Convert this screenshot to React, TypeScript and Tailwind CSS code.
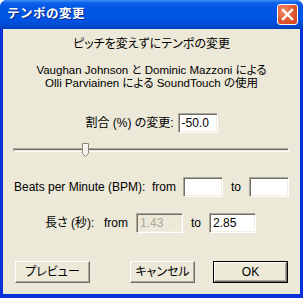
import React from "react";

const editBox =
  "h-[20px] border border-t-[#aca899] border-l-[#aca899] border-b-white border-r-white shadow-[inset_1px_1px_0_#716f64,inset_-1px_-1px_0_#f1efe2] px-[3px] flex items-center text-[12px] leading-none";

const btnBase =
  "h-[22px] bg-[#ece9d8] flex items-center justify-center text-[12px] border border-t-white border-l-white border-b-[#716f64] border-r-[#716f64] shadow-[inset_-1px_-1px_0_#aca899]";

const EditBox = ({ value = "", width, disabled = false }: { value?: string; width: string; disabled?: boolean }) => (
  <div className={`${editBox} ${width} ${disabled ? "bg-[#ece9d8] text-[#aca899]" : "bg-white text-black"}`}>
    {value}
  </div>
);

export default function App() {
  return (
    <div className="w-[303px] h-[298px] rounded-t-[7px] bg-[#0831d9] flex flex-col font-['Liberation_Sans','Noto_Sans_CJK_JP',sans-serif] text-[12px] text-black [font-feature-settings:'palt']">
      {/* title bar */}
      <div className="h-[29px] shrink-0 rounded-t-[7px] bg-[linear-gradient(to_bottom,#3c8df7_0px,#0b61ea_3px,#0055e5_8px,#0054e3_20px,#0049d1_26px,#003cba_29px)] flex items-center pl-[7px] pr-[5px]">
        <span className="flex-1 text-white font-bold text-[12.5px] tracking-[0.5px] [font-feature-settings:normal] [text-shadow:1px_1px_0_#0a2a8a]">
          テンポの変更
        </span>
        <div className="w-[21px] h-[21px] rounded-[3px] border border-white bg-[radial-gradient(circle_at_30%_30%,#f08a66_0%,#e0582f_55%,#c9421e_100%)] flex items-center justify-center">
          <svg width="13" height="13" viewBox="0 0 13 13">
            <path d="M2 2L11 11M11 2L2 11" stroke="white" strokeWidth="2.4" strokeLinecap="square" />
          </svg>
        </div>
      </div>

      {/* client area */}
      <div className="flex-1 mx-[3px] mb-[4px] bg-[#ece9d8] flex flex-col">
        <div className="mt-[9px] text-center leading-[13px]">ピッチを変えずにテンポの変更</div>
        <div className="mt-[13px] text-center text-[11.5px] leading-[13px]">
          <div>Vaughan Johnson と Dominic Mazzoni による</div>
          <div>Olli Parviainen による SoundTouch の使用</div>
        </div>

        <div className="mt-[23px] flex items-center justify-center gap-[4px]">
          <span>割合 (%) の変更:</span>
          <EditBox value="-50.0" width="w-[40px]" />
        </div>

        {/* slider */}
        <div className="mt-[10px] mx-[10px] mr-[11px] h-[14px] relative flex items-center">
          <div className="w-full h-[4px] border-t border-l border-t-[#aca899] border-l-[#aca899] border-b border-r border-b-white border-r-white bg-[#ece9d8] shadow-[inset_0_1px_0_#716f64]" />
          <svg className="absolute left-[69px] top-0" width="7" height="14" viewBox="0 0 7 14">
            <path d="M0.5 0.5H6.5V10.5L3.5 13.5L0.5 10.5Z" fill="#f4f3ee" stroke="#8c8a7c" />
            <path d="M1.5 1.5H5.5" stroke="white" />
            <path d="M1.5 1.5V10" stroke="white" />
          </svg>
        </div>

        {/* BPM */}
        <div className="mt-[20px] pl-[11px] flex items-center">
          <span className="w-[138px] shrink-0 whitespace-nowrap">Beats per Minute (BPM):</span>
          <span className="w-[31px] shrink-0">from</span>
          <EditBox width="w-[40px]" />
          <span className="w-[26px] shrink-0 pl-[8px]">to</span>
          <EditBox width="w-[40px]" />
        </div>

        {/* length */}
        <div className="mt-[16px] pl-[42px] flex items-center">
          <span className="w-[59px] shrink-0 whitespace-nowrap">長さ (秒):</span>
          <span className="w-[32px] shrink-0">from</span>
          <EditBox value="1.43" width="w-[47px]" disabled />
          <span className="w-[26px] shrink-0 pl-[8px]">to</span>
          <EditBox value="2.85" width="w-[47px]" />
        </div>

        {/* buttons */}
        <div className="mt-[28px] pl-[12px] flex items-center">
          <button className={`${btnBase} w-[75px]`}>プレビュー</button>
          <button className={`${btnBase} w-[65px] ml-[40px]`}>キャンセル</button>
          <div className="ml-[18px] w-[75px] h-[22px] border border-black flex">
            <button className={`${btnBase} w-full h-full`}>OK</button>
          </div>
        </div>
      </div>
    </div>
  );
}
